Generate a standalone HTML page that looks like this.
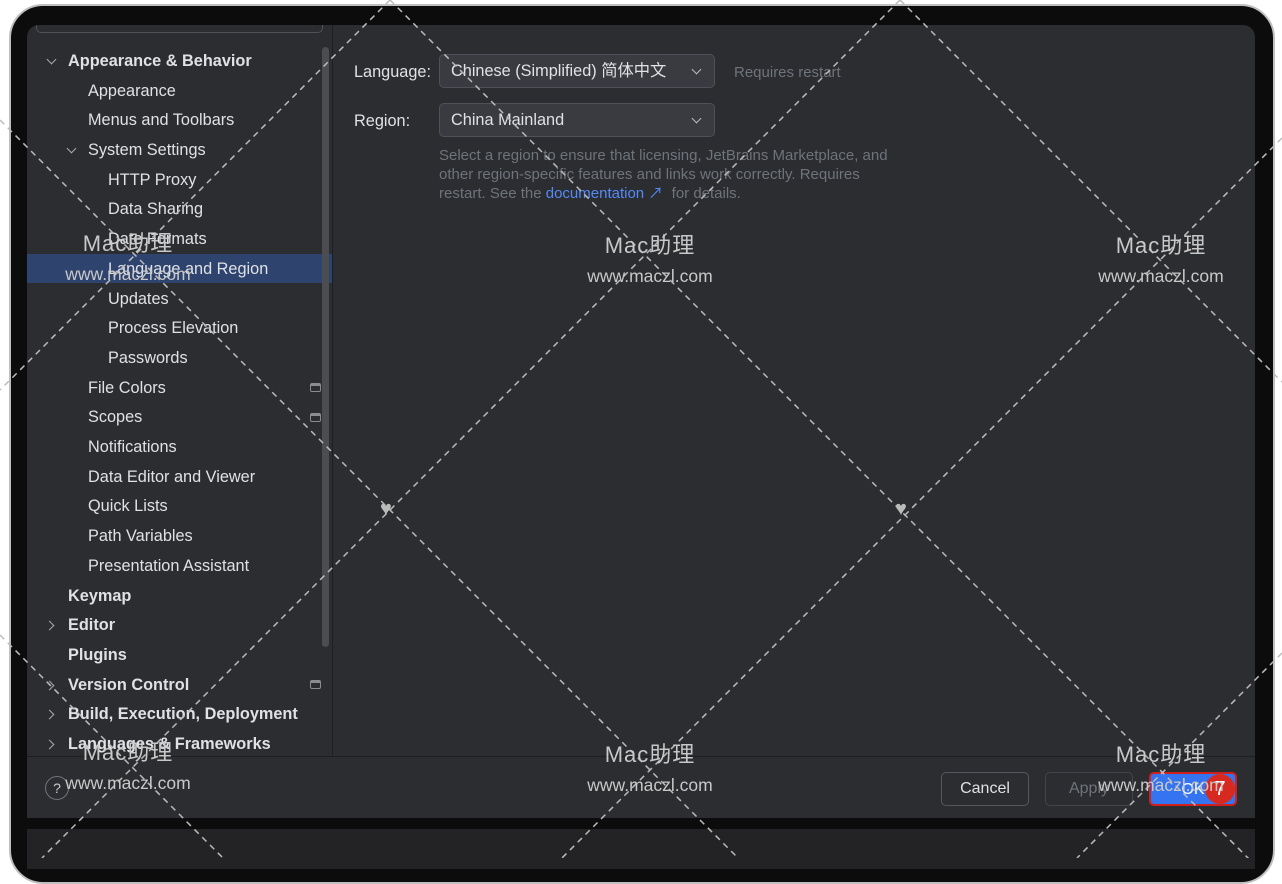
<!DOCTYPE html>
<html><head><meta charset="utf-8"><style>
*{margin:0;padding:0;box-sizing:border-box}
body{width:1282px;height:858px;background:#fff;position:relative;overflow:hidden;font-family:"Liberation Sans","Noto Sans CJK SC",sans-serif}
.bezel{position:absolute;left:9px;top:4px;width:1266px;height:880px;background:#0c0c0d;border-radius:34px;border:2px solid #bfbfbf}
.screen{position:absolute;left:27px;top:25px;width:1228px;height:793px;background:#2b2d30;border-radius:12px 12px 0 0;overflow:hidden}
.bottom{position:absolute;left:27px;top:829px;width:1228px;height:40px;background:#232325}
.side{position:absolute;left:0;top:0;width:306px;height:731px;border-right:1px solid #1e1f22}
.it{position:absolute;height:29px;line-height:29px;font-size:16.3px;color:#dfe1e5;white-space:nowrap}
.b{font-weight:bold;font-size:16.3px}
.sel{position:absolute;left:0;top:229px;width:305px;height:29px;background:#2e436e}
.chev{position:absolute;width:7px;height:7px;border-right:1.3px solid #aaa;border-bottom:1.3px solid #aaa}
.dn{transform:rotate(45deg)}
.rt{transform:rotate(-45deg)}
.foot{position:absolute;left:0;top:731px;width:1228px;height:62px;border-top:1px solid #1e1f22}
.btn{position:absolute;height:34px;border:1px solid #55575c;border-radius:5px;color:#dfe1e5;font-size:16px;text-align:center;line-height:32px}
.dd{position:absolute;left:412px;width:276px;height:34px;border:1px solid #4e5157;border-radius:5px;background:#393b40;color:#dfe1e5;font-size:16.3px;line-height:32px;padding-left:11px}
.dd:after{content:"";position:absolute;right:14px;top:11px;width:6px;height:6px;border-right:1.4px solid #bbb;border-bottom:1.4px solid #bbb;transform:rotate(45deg)}
.lbl{position:absolute;font-size:16.3px;color:#dfe1e5}
.wm{position:absolute;color:#c8c8c8;text-align:center;width:180px;font-size:22px;line-height:30px;letter-spacing:1px}
.wm span{display:block;font-size:17.5px;letter-spacing:0}
.ic{position:absolute;left:283px;width:11px;height:9px;border:1px solid #8a8c90;border-radius:2px;border-top-width:3px}
</style></head><body>
<div class="bezel"></div>
<div class="bottom"></div>
<div class="screen">
 <div class="side">
  <div style="position:absolute;left:9px;top:-10px;width:287px;height:18px;border:1px solid #4e5157;border-radius:5px"></div>
  <div class="sel"></div>
  <div class="it b" style="left:41px;top:22px">Appearance &amp; Behavior</div>
  <div class="chev dn" style="left:21px;top:31px"></div>
  <div class="it" style="left:61px;top:52px">Appearance</div>
  <div class="it" style="left:61px;top:81px">Menus and Toolbars</div>
  <div class="chev dn" style="left:41px;top:120px"></div>
  <div class="it" style="left:61px;top:111px">System Settings</div>
  <div class="it" style="left:81px;top:141px">HTTP Proxy</div>
  <div class="it" style="left:81px;top:170px">Data Sharing</div>
  <div class="it" style="left:81px;top:200px">Date Formats</div>
  <div class="it" style="left:81px;top:230px">Language and Region</div>
  <div class="it" style="left:81px;top:260px">Updates</div>
  <div class="it" style="left:81px;top:289px">Process Elevation</div>
  <div class="it" style="left:81px;top:319px">Passwords</div>
  <div class="it" style="left:61px;top:349px">File Colors</div><div class="ic" style="top:358px"></div>
  <div class="it" style="left:61px;top:378px">Scopes</div><div class="ic" style="top:388px"></div>
  <div class="it" style="left:61px;top:408px">Notifications</div>
  <div class="it" style="left:61px;top:438px">Data Editor and Viewer</div>
  <div class="it" style="left:61px;top:467px">Quick Lists</div>
  <div class="it" style="left:61px;top:497px">Path Variables</div>
  <div class="it" style="left:61px;top:527px">Presentation Assistant</div>
  <div class="it b" style="left:41px;top:557px">Keymap</div>
  <div class="it b" style="left:41px;top:586px">Editor</div><div class="chev rt" style="left:19px;top:597px"></div>
  <div class="it b" style="left:41px;top:616px">Plugins</div>
  <div class="it b" style="left:41px;top:646px">Version Control</div><div class="chev rt" style="left:19px;top:657px"></div><div class="ic" style="top:655px"></div>
  <div class="it b" style="left:41px;top:675px">Build, Execution, Deployment</div><div class="chev rt" style="left:19px;top:686px"></div>
  <div class="it b" style="left:41px;top:705px">Languages &amp; Frameworks</div><div class="chev rt" style="left:19px;top:716px"></div>
  <div style="position:absolute;left:295px;top:22px;width:7px;height:600px;background:#4b4d51;border-radius:4px"></div>
 </div>
 <div class="lbl" style="left:327px;top:38px">Language:</div>
 <div class="dd" style="top:29px">Chinese (Simplified) 简体中文</div>
 <div class="lbl" style="left:707px;top:39px;color:#6f737a;font-size:15px">Requires restart</div>
 <div class="lbl" style="left:327px;top:87px">Region:</div>
 <div class="dd" style="top:78px">China Mainland</div>
 <div class="lbl" style="left:412px;top:121px;width:462px;color:#6f737a;font-size:15px;line-height:19px">Select a region to ensure that licensing, JetBrains Marketplace, and other region-specific features and links work correctly. Requires restart. See the <span style="color:#548af7">documentation ↗</span>&nbsp; for details.</div>
 <div class="foot">
  <div style="position:absolute;left:18px;top:19px;width:24px;height:24px;border:1px solid #6f737a;border-radius:50%;color:#ccc;text-align:center;line-height:22px;font-size:14px">?</div>
  <div class="btn" style="left:914px;top:15px;width:88px">Cancel</div>
  <div class="btn" style="left:1018px;top:15px;width:88px;color:#6f737a;border-color:#43454a">Apply</div>
  <div class="btn" style="left:1122px;top:15px;width:88px;background:#3574f0;border:2px solid #d0201c;color:#fff">OK</div>
  <div style="position:absolute;left:1178px;top:17px;width:30px;height:30px;border-radius:50%;background:#d62a20;color:#fff;text-align:center;line-height:30px;font-size:20px">7</div>
 </div>
</div>
<svg width="1282" height="858" style="position:absolute;left:0;top:0" stroke="#bbb" stroke-width="1.5" stroke-dasharray="6,5" fill="none">
<line x1="0" y1="120" x2="738" y2="858"/>
<line x1="390" y1="0" x2="1282" y2="892"/>
<line x1="900" y1="0" x2="1282" y2="382"/>
<line x1="0" y1="635" x2="223" y2="858"/>
<line x1="390" y1="0" x2="0" y2="390"/>
<line x1="900" y1="0" x2="42" y2="858"/>
<line x1="1282" y1="138" x2="562" y2="858"/>
<line x1="1282" y1="653" x2="1077" y2="858"/>
</svg>
<div style="position:absolute;left:380px;top:498px;color:#bbb;font-size:20px">♥</div>
<div style="position:absolute;left:895px;top:498px;color:#bbb;font-size:20px">♥</div>
<div class="wm" style="left:38px;top:229px">Mac助理<span>www.maczl.com</span></div>
<div class="wm" style="left:560px;top:231px">Mac助理<span>www.maczl.com</span></div>
<div class="wm" style="left:1071px;top:231px">Mac助理<span>www.maczl.com</span></div>
<div class="wm" style="left:38px;top:738px">Mac助理<span>www.maczl.com</span></div>
<div class="wm" style="left:560px;top:740px">Mac助理<span>www.maczl.com</span></div>
<div class="wm" style="left:1071px;top:740px">Mac助理<span>www.maczl.com</span></div>
</body></html>
